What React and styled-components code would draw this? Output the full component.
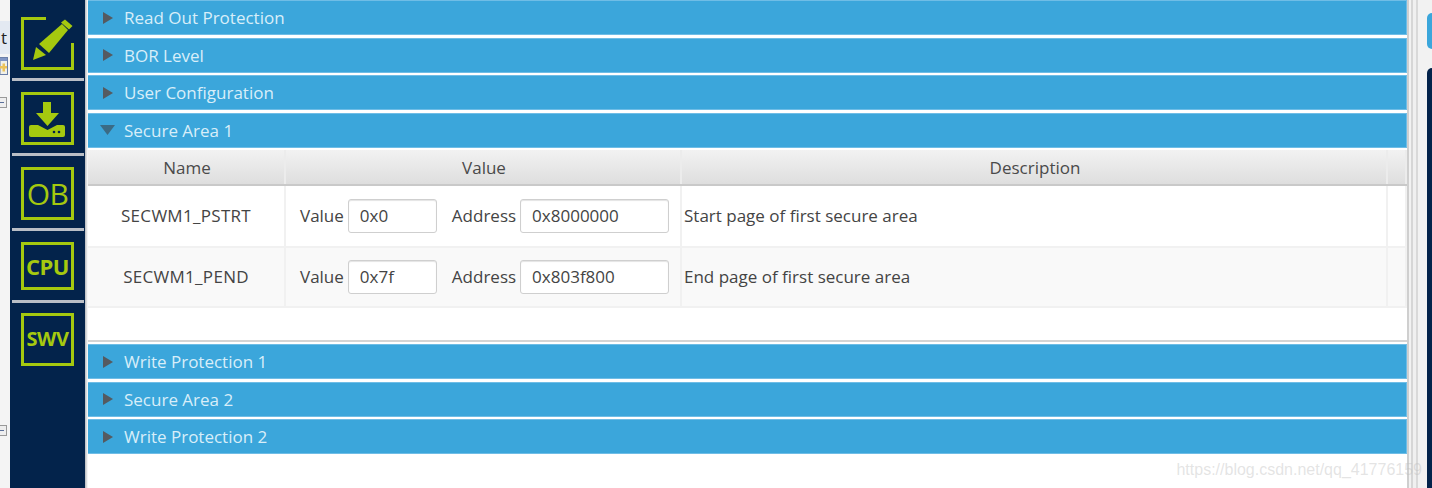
import styled, { createGlobalStyle } from "styled-components";

const GlobalStyle = createGlobalStyle`
  html, body {
    margin: 0;
    padding: 0;
    background: #ffffff;
  }
  body {
    font-family: "Open Sans", "Noto Sans", sans-serif;
    overflow: hidden;
  }
`;

const Page = styled.div`
  width: 1432px;
  height: 488px;
  display: flex;
  overflow: hidden;
  position: relative;
  background: #ffffff;
`;

const OuterStrip = styled.div`
  width: 10px;
  flex: none;
  background: #f4f4f4;
  display: flex;
  flex-direction: column;
  overflow: hidden;
`;

const TabStub = styled.div`
  height: 33px;
  margin-top: 21px;
  background: #e3e9f2;
  color: #222222;
  font-size: 17px;
  line-height: 33px;
  padding-left: 1px;
  flex: none;
`;

const TinyIconBox = styled.div`
  width: 8px;
  height: 18px;
  margin-top: 3px;
  flex: none;
`;

const Collapse = styled.div`
  width: 7px;
  height: 11px;
  margin-top: ${(p) => p.$top}px;
  background: #eeeeee;
  border: 1px solid #999999;
  border-left: none;
  box-sizing: border-box;
  flex: none;
  display: flex;
  align-items: center;

  &::after {
    content: "";
    width: 4px;
    height: 1px;
    background: #5a6f9a;
  }
`;

const Nav = styled.nav`
  width: 75px;
  flex: none;
  background: #03234b;
  display: flex;
  flex-direction: column;
  align-items: center;
  padding-top: 17px;
  box-sizing: border-box;
`;

const NavBox = styled.div`
  width: 53px;
  height: ${(p) => p.$h || 53}px;
  box-sizing: border-box;
  border: 3px solid #a5c90f;
  color: #a5c90f;
  display: flex;
  align-items: center;
  justify-content: center;
  font-size: ${(p) => p.$size}px;
  font-weight: ${(p) => p.$weight || 400};
  letter-spacing: -0.5px;
  padding-bottom: ${(p) => p.$lift || 0}px;
  flex: none;
`;

const BareIcon = styled.div`
  width: 53px;
  height: 53px;
  flex: none;
`;

const NavRule = styled.div`
  width: 72px;
  height: 3px;
  margin: ${(p) => p.$top || 8}px 0 ${(p) => p.$bottom || 11}px;
  background: #b9bec6;
  flex: none;
`;

const Gutter = styled.div`
  width: 3px;
  flex: none;
  background: linear-gradient(to right, #b5b8bc, #ffffff);
`;

const Main = styled.main`
  width: 1319px;
  flex: none;
  display: flex;
  flex-direction: column;
`;

const SectionHeader = styled.div`
  height: 35px;
  margin-bottom: ${(p) => p.$gap ?? 2.5}px;
  background: #3ba6db;
  border: 1px solid #6fbde6;
  border-left: none;
  box-sizing: border-box;
  display: flex;
  align-items: center;
  padding-left: 12px;
  color: #d8eef9;
  font-size: 17px;
  flex: none;
`;

const Arrow = styled.span`
  width: 24px;
  display: flex;
  align-items: center;
  flex: none;
`;

const TablePanel = styled.div`
  height: 194px;
  flex: none;
  display: flex;
  flex-direction: column;
  background: #ffffff;
  border-bottom: 2px solid #d4d4d4;
  box-sizing: border-box;
  margin-bottom: 2.5px;
`;

const Row = styled.div`
  display: grid;
  grid-template-columns: 198px 396px 706px 19px;
  height: ${(p) => p.$h}px;
  flex: none;
  background: ${(p) => p.$bg || "#ffffff"};
  border-bottom: 2px solid #f1f1f1;
  box-sizing: border-box;
`;

const HeaderRow = styled(Row)`
  margin-top: 2px;
  background: linear-gradient(to bottom, #f2f2f2, #dedede);
  border-bottom: 2px solid #c9c9c9;
`;

const HeadCell = styled.div`
  display: flex;
  align-items: center;
  justify-content: center;
  font-size: 17px;
  color: #4a4a4a;
  border-right: 2px solid #ececec;
  box-sizing: border-box;
  padding: 1px 0 0 2px;
`;

const Cell = styled.div`
  display: flex;
  align-items: center;
  font-size: 17px;
  color: #444444;
  border-right: 2px solid #f1f1f1;
  box-sizing: border-box;
  justify-content: ${(p) => (p.$center ? "center" : "flex-start")};
  padding-left: ${(p) => p.$pad || 0}px;
  letter-spacing: ${(p) => p.$spacing || 0}px;
  white-space: nowrap;
`;

const Label = styled.span`
  margin-right: 4px;
`;

const Field = styled.div`
  width: ${(p) => p.$w}px;
  height: 34px;
  margin-right: ${(p) => p.$mr || 0}px;
  box-sizing: border-box;
  border: 1px solid #cfcfcf;
  border-radius: 3px;
  background: #ffffff;
  box-shadow: inset 0 1px 1px #e4e4e4;
  display: flex;
  align-items: center;
  padding-left: 11px;
  font-size: 17px;
  color: #444444;
  flex: none;
`;

const Scrollbars = styled.div`
  width: 13px;
  flex: none;
  background: linear-gradient(to right, #cfcfcf 0 2px, #f2f2f2 2px 4px, #d6d6d6 4px 6px, #f0f0f0 6px 9px, #d9d9d9 9px 11px, #f2f2f2 11px);
`;

const SideGap = styled.div`
  width: 7px;
  flex: none;
  background: #f2f2f2;
`;

const RightPanel = styled.div`
  flex: 1;
  background: #f2f2f2;
  display: flex;
  flex-direction: column;
`;

const RightTab = styled.div`
  height: 36px;
  margin-top: 13px;
  background: #3ba6db;
  border-radius: 5px 0 0 5px;
  flex: none;
`;

const RightBody = styled.div`
  flex: 1;
  margin-top: 19px;
  background: #03234b;
  border-radius: 6px 0 0 0;
`;

const Watermark = styled.div`
  position: absolute;
  right: 10px;
  top: 461px;
  font-family: "Liberation Sans", sans-serif;
  font-size: 16px;
  color: rgba(190, 190, 190, 0.42);
  pointer-events: none;
`;

const GREEN = "#a5c90f";

const TinyIcon = () => (
  <svg width="8" height="18" viewBox="0 0 8 18" style={{ display: "block" }}>
    <rect x="0" y="0.5" width="7.500" height="17" fill="#f0f0e8" stroke="#6b7fa8" />
    <rect x="0" y="1" width="7" height="3" fill="#7f95c4" />
    <path d="M0 9h7v2.500H0z" fill="#ecc35a" />
    <path d="M2.500 6.500h2.500v8H2.500z" fill="#ecc35a" />
  </svg>
);

const EditIcon = () => (
  <svg width="53" height="53" viewBox="0 0 53 53" fill="none">
    <path d="M25 1.500H1.500V51.500H51.500V26" stroke={GREEN} strokeWidth="3" />
    <path d="M15 30l10 8-13 5z" fill={GREEN} />
    <path d="M18 27L41 7l6 6-19 23z" fill={GREEN} />
    <path d="M40 5.500l4-3 7.500 6.500-3.500 3.500z" fill={GREEN} />
  </svg>
);

const DownloadIcon = () => (
  <svg width="53" height="53" viewBox="0 0 53 53" fill="none">
    <rect x="1.500" y="1.500" width="50" height="50" stroke={GREEN} strokeWidth="3" />
    <path d="M22 10h8v11h8L26.500 34 15 21h7z" fill={GREEN} />
    <path d="M10 33h7l9.500 5L36 33h6a2 2 0 0 1 2 2v8a2 2 0 0 1-2 2H10a2 2 0 0 1-2-2v-8a2 2 0 0 1 2-2z" fill={GREEN} />
    <circle cx="33" cy="40" r="1.300" fill="#03234b" />
    <circle cx="38" cy="40" r="1.300" fill="#03234b" />
  </svg>
);

const ArrowIcon = ({ open }) => (
  <svg width="16" height="14" viewBox="0 0 16 14">
    {open ? (
      <path d="M0 2h15L7.500 12z" fill="#3b6b85" />
    ) : (
      <path d="M3 1l10 6-10 6z" fill="#555a60" />
    )}
  </svg>
);

const Section = ({ title, open, gap }) => (
  <SectionHeader $gap={gap}>
    <Arrow>
      <ArrowIcon open={open} />
    </Arrow>
    {title}
  </SectionHeader>
);

const rows = [
  {
    name: "SECWM1_PSTRT",
    value: "0x0",
    address: "0x8000000",
    description: "Start page of first secure area",
    bg: "#ffffff",
    h: 62,
  },
  {
    name: "SECWM1_PEND",
    value: "0x7f",
    address: "0x803f800",
    description: "End page of first secure area",
    bg: "#f9f9f9",
    h: 60,
  },
];

export default function App() {
  return (
    <>
      <GlobalStyle />
      <Page>
        <OuterStrip>
          <TabStub>t</TabStub>
          <TinyIconBox>
            <TinyIcon />
          </TinyIconBox>
          <Collapse $top={22} />
          <Collapse $top={317} />
        </OuterStrip>
        <Nav>
          <BareIcon>
            <EditIcon />
          </BareIcon>
          <NavRule />
          <BareIcon>
            <DownloadIcon />
          </BareIcon>
          <NavRule />
          <NavBox $size={30}>OB</NavBox>
          <NavRule />
          <NavBox $size={22} $weight={700} $h={48}>
            CPU
          </NavBox>
          <NavRule $top={10} $bottom={10} />
          <NavBox $size={20} $weight={700} $lift={2}>
            SWV
          </NavBox>
        </Nav>
        <Gutter />
        <Main>
          <Section title="Read Out Protection" />
          <Section title="BOR Level" />
          <Section title="User Configuration" />
          <Section title="Secure Area 1" open gap={0} />
          <TablePanel>
            <HeaderRow $h={36}>
              <HeadCell>Name</HeadCell>
              <HeadCell>Value</HeadCell>
              <HeadCell>Description</HeadCell>
              <HeadCell />
            </HeaderRow>
            {rows.map((row) => (
              <Row key={row.name} $h={row.h} $bg={row.bg}>
                <Cell $center $spacing={0.3}>
                  {row.name}
                </Cell>
                <Cell $pad={14}>
                  <Label>Value</Label>
                  <Field $w={89} $mr={15}>
                    {row.value}
                  </Field>
                  <Label>Address</Label>
                  <Field $w={149}>{row.address}</Field>
                </Cell>
                <Cell $pad={2}>{row.description}</Cell>
                <Cell />
              </Row>
            ))}
          </TablePanel>
          <Section title="Write Protection 1" />
          <Section title="Secure Area 2" />
          <Section title="Write Protection 2" />
        </Main>
        <Scrollbars />
        <SideGap />
        <RightPanel>
          <RightTab />
          <RightBody />
        </RightPanel>
        <Watermark>https://blog.csdn.net/qq_41776159</Watermark>
      </Page>
    </>
  );
}
